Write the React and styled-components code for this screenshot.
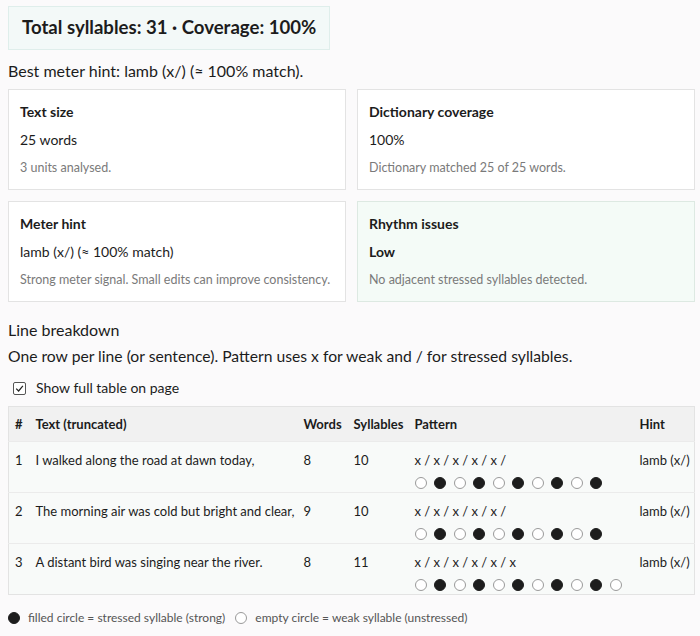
import React from 'react';
import styled, { createGlobalStyle } from 'styled-components';

const GlobalStyle = createGlobalStyle`
  body {
    margin: 0;
    background: #fbfafb;
    font-family: "Segoe UI", Lato, "Liberation Sans", sans-serif;
    color: #1c1c1c;
  }
`;

const Page = styled.div`
  padding: 6px 5px 0 8px;
`;

const Summary = styled.div`
  display: inline-block;
  padding: 9px 13px 10px;
  background: #f3f9f8;
  border: 1px solid #dfeeeb;
  font-size: 18.6px;
  font-weight: 700;
  line-height: 23px;
`;

const Lead = styled.p`
  margin: 11px 0 8px;
  font-size: 16px;
  line-height: 20px;
`;

const CardGrid = styled.div`
  display: grid;
  grid-template-columns: 1fr 1fr;
  gap: 11px;
`;

const Card = styled.div`
  background: ${p => (p.tone === 'good' ? '#f4fbf7' : '#fff')};
  border: 1px solid ${p => (p.tone === 'good' ? '#dde9e2' : '#e3e3e3')};
  padding: 12px 11px;
  height: 101px;
  box-sizing: border-box;
`;

const CardTitle = styled.div`
  font-size: 14px;
  font-weight: 700;
  line-height: 20px;
`;

const CardValue = styled.div`
  margin-top: 8px;
  font-size: 14px;
  line-height: 20px;
  font-weight: ${p => (p.strong ? 700 : 400)};
`;

const CardNote = styled.div`
  margin-top: 9px;
  font-size: 12.5px;
  color: #7a7a7a;
  line-height: 18px;
  white-space: nowrap;
`;

const SectionTitle = styled.div`
  margin-top: 17px;
  font-size: 16px;
  line-height: 22px;
`;

const SectionText = styled.div`
  margin-top: 4px;
  font-size: 15.7px;
  line-height: 22px;
`;

const CheckRow = styled.label`
  display: flex;
  align-items: center;
  gap: 10px;
  margin: 12px 0 9px 5px;
  font-size: 14px;
  line-height: 18px;
`;

const Check = styled.span`
  width: 11px;
  height: 11px;
  border: 1px solid #555;
  border-radius: 2px;
  display: inline-flex;
  align-items: center;
  justify-content: center;
  background: #fff;
`;

const Table = styled.table`
  width: 100%;
  table-layout: fixed;
  border-collapse: collapse;
  border: 1px solid #e3e3e3;
  background: #f8faf9;
  font-size: 13px;
`;

const Th = styled.th`
  width: ${p => p.w}px;
  background: #f1f1f1;
  text-align: left;
  font-weight: 700;
  padding: 0 6px;
  height: 35px;
  box-sizing: border-box;
  white-space: nowrap;
`;

const Td = styled.td`
  vertical-align: top;
  padding: 10px 6px 0;
  height: 51px;
  box-sizing: border-box;
  border-top: 1px solid #ebebeb;
  white-space: nowrap;
  overflow: hidden;
`;

const Dots = styled.div`
  display: flex;
  gap: 7.5px;
  margin-top: 9px;
`;

const Dot = styled.span`
  flex: none;
  width: 12px;
  height: 12px;
  border-radius: 50%;
  box-sizing: border-box;
  background: ${p => (p.on ? '#1d1d1d' : '#fff')};
  border: 1px solid ${p => (p.on ? '#1d1d1d' : '#9a9a9a')};
`;

const Legend = styled.div`
  display: flex;
  align-items: center;
  margin-top: 15px;
  font-size: 12px;
  color: #555;
`;

const LegendItem = styled.span`
  display: inline-flex;
  align-items: center;
  gap: 8px;
  margin-right: 10px;
`;

const rows = [
  { n: 1, text: 'I walked along the road at dawn today,', words: 8, syl: 10 },
  { n: 2, text: 'The morning air was cold but bright and clear,', words: 9, syl: 10 },
  { n: 3, text: 'A distant bird was singing near the river.', words: 8, syl: 11 },
];

const Pattern = ({ count }) => {
  const marks = Array.from({ length: count }, (_, i) => (i % 2 ? '/' : 'x'));
  return (
    <>
      <div>{marks.join(' ')}</div>
      <Dots>
        {marks.map((m, i) => <Dot key={i} on={m === '/' ? 1 : 0} />)}
      </Dots>
    </>
  );
};

export default function App() {
  return (
    <Page>
      <GlobalStyle />
      <Summary>Total syllables: 31 · Coverage: 100%</Summary>
      <Lead>Best meter hint: lamb (x/) (≈ 100% match).</Lead>
      <CardGrid>
        <Card>
          <CardTitle>Text size</CardTitle>
          <CardValue>25 words</CardValue>
          <CardNote>3 units analysed.</CardNote>
        </Card>
        <Card>
          <CardTitle>Dictionary coverage</CardTitle>
          <CardValue>100%</CardValue>
          <CardNote>Dictionary matched 25 of 25 words.</CardNote>
        </Card>
        <Card>
          <CardTitle>Meter hint</CardTitle>
          <CardValue>lamb (x/) (≈ 100% match)</CardValue>
          <CardNote>Strong meter signal. Small edits can improve consistency.</CardNote>
        </Card>
        <Card tone="good">
          <CardTitle>Rhythm issues</CardTitle>
          <CardValue strong>Low</CardValue>
          <CardNote>No adjacent stressed syllables detected.</CardNote>
        </Card>
      </CardGrid>
      <SectionTitle>Line breakdown</SectionTitle>
      <SectionText>One row per line (or sentence). Pattern uses x for weak and / for stressed syllables.</SectionText>
      <CheckRow>
        <Check>
          <svg width="9" height="9" viewBox="0 0 9 9">
            <path d="M1.2 4.6 L3.6 7 L7.9 1.8" fill="none" stroke="#222" strokeWidth="1.2" />
          </svg>
        </Check>
        Show full table on page
      </CheckRow>
      <Table>
        <thead>
          <tr>
            <Th w={21}>#</Th>
            <Th w={268}>Text (truncated)</Th>
            <Th w={50}>Words</Th>
            <Th w={61}>Syllables</Th>
            <Th w={225}>Pattern</Th>
            <Th>Hint</Th>
          </tr>
        </thead>
        <tbody>
          {rows.map(r => (
            <tr key={r.n}>
              <Td>{r.n}</Td>
              <Td>{r.text}</Td>
              <Td>{r.words}</Td>
              <Td>{r.syl}</Td>
              <Td><Pattern count={r.syl} /></Td>
              <Td>lamb (x/)</Td>
            </tr>
          ))}
        </tbody>
      </Table>
      <Legend>
        <LegendItem><Dot on={1} />filled circle = stressed syllable (strong)</LegendItem>
        <LegendItem><Dot />empty circle = weak syllable (unstressed)</LegendItem>
      </Legend>
    </Page>
  );
}
